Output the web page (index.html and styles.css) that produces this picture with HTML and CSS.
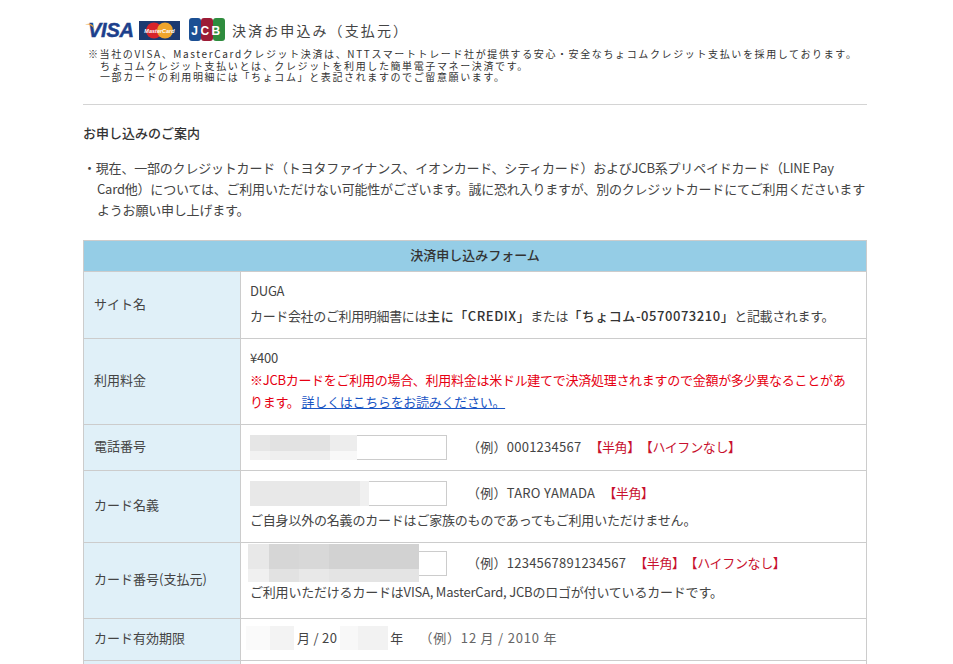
FILE: index.html

```html
<!DOCTYPE html>
<html lang="ja">
<head>
  <meta charset="UTF-8">
  <title>決済お申込み（支払元）</title>
  <link rel="stylesheet" href="styles.css">
</head>
<body>
  <div class="wrap">
    <div class="brand">
      <div class="brand-head">
        <svg class="logos" width="142" height="24" viewBox="0 0 142 24">
          <text x="3" y="19" font-family="Liberation Sans" font-size="20" font-weight="700" font-style="italic" fill="#1c3f8c" stroke="#1c3f8c" stroke-width="0.5" textLength="46">VISA</text>
          <path d="M0 6.500 C4 6 8 7 10 13 L8 7.500 C6 5.500 3 5.500 0 6.500 Z" fill="#e9a43a"/>
          <rect x="54" y="3" width="41" height="19" fill="#1d3a70"/>
          <circle cx="69" cy="12.5" r="8" fill="#d8232a"/>
          <circle cx="80" cy="12.5" r="8" fill="#efa52d"/>
          <text x="74.500" y="14.500" text-anchor="middle" font-family="Liberation Sans" font-size="5.500" font-weight="700" font-style="italic" fill="#fff">MasterCard</text>
          <rect x="104" y="0" width="12" height="23" rx="3" fill="#1b4f93"/>
          <rect x="116" y="0" width="12" height="23" rx="3" fill="#9c1c36"/>
          <rect x="128" y="0" width="12" height="23" rx="3" fill="#2f8c3e"/>
          <text x="122" y="17" text-anchor="middle" font-family="Liberation Sans" font-size="12" font-weight="700" letter-spacing="2.500" fill="#fff">JCB</text>
        </svg>
        <span class="brand-title">決済お申込み（支払元）</span>
      </div>
      <p class="brand-note">※当社のVISA、MasterCardクレジット決済は、NTTスマートトレード社が提供する安心・安全なちょコムクレジット支払いを採用しております。<br>
        <span class="indent">ちょコムクレジット支払いとは、クレジットを利用した簡単電子マネー決済です。</span><br>
        <span class="indent">一部カードの利用明細には「ちょコム」と表記されますのでご留意願います。</span></p>
    </div>

    <h4 class="guide-title">お申し込みのご案内</h4>
    <p class="guide">・現在、一部のクレジットカード（トヨタファイナンス、イオンカード、シティカード）およびJCB系プリペイドカード（LINE Pay<br>Card他）については、ご利用いただけない可能性がございます。誠に恐れ入りますが、別のクレジットカードにてご利用くださいますようお願い申し上げます。</p>

    <table class="form-table">
      <colgroup>
        <col class="col-label">
        <col>
      </colgroup>
      <tr><th colspan="2" class="form-head">決済申し込みフォーム</th></tr>
      <tr class="row-site">
        <th>サイト名</th>
        <td>
          <p class="line">DUGA</p>
          <p class="line line-next">カード会社のご利用明細書には<b>主に「CREDIX」</b>または<b>「ちょコム-0570073210」</b>と記載されます。</p>
        </td>
      </tr>
      <tr class="row-fee">
        <th>利用料金</th>
        <td>
          <p class="line">¥400</p>
          <p class="line warn">※JCBカードをご利用の場合、利用料金は米ドル建てで決済処理されますので金額が多少異なることがあります。<a href="#">詳しくはこちらをお読みください。</a></p>
        </td>
      </tr>
      <tr class="row-tel">
        <th>電話番号</th>
        <td>
          <div class="field">
            <span class="input-box">
              <input type="text">
              <span class="mosaic mosaic-tel"><i></i><i></i><i></i><i></i><i></i><i></i><i></i><i></i></span>
            </span>
            <span class="eg">（例）0001234567</span>
            <span class="req">【半角】</span>
            <span class="req">【ハイフンなし】</span>
          </div>
        </td>
      </tr>
      <tr class="row-name">
        <th>カード名義</th>
        <td>
          <div class="field">
            <span class="input-box">
              <input type="text">
              <span class="mosaic mosaic-name"><i></i><i></i></span>
            </span>
            <span class="eg">（例）TARO YAMADA</span>
            <span class="req">【半角】</span>
          </div>
          <p class="line sub">ご自身以外の名義のカードはご家族のものであってもご利用いただけません。</p>
        </td>
      </tr>
      <tr class="row-card">
        <th>カード番号(支払元)</th>
        <td>
          <div class="field">
            <span class="input-box">
              <input type="text">
              <span class="mosaic mosaic-card"><i></i><i></i><i></i><i></i><i></i><i></i><i></i><i></i><i></i><i></i></span>
            </span>
            <span class="eg">（例）1234567891234567</span>
            <span class="req">【半角】</span>
            <span class="req">【ハイフンなし】</span>
          </div>
          <p class="line sub">ご利用いただけるカードはVISA, MasterCard, JCBのロゴが付いているカードです。</p>
        </td>
      </tr>
      <tr class="row-exp">
        <th>カード有効期限</th>
        <td>
          <div class="expire">
            <span class="mosaic-inline mosaic-month"><i></i><i></i></span>
            <span>月 / 20</span>
            <span class="mosaic-inline mosaic-year"><i></i><i></i></span>
            <span>年</span>
            <span class="expire-eg">（例）12 月 / 2010 年</span>
          </div>
        </td>
      </tr>
      <tr class="row-last"><th></th><td></td></tr>
    </table>
  </div>
</body>
</html>
```

FILE: styles.css

```css
html, body {
  height: 664px;
  overflow: hidden;
}
body {
  margin: 0;
  background-color: #fff;
  color: #444;
  font-family: "Noto Sans CJK JP", "Liberation Sans", sans-serif;
  font-size: 13px;
}
.wrap {
  width: 784px;
  margin-left: 83px;
}
.brand {
  height: 86px;
  padding-top: 18px;
  border-bottom: 1px solid #d4d4d4;
}
.brand-head {
  display: flex;
  align-items: center;
  height: 24px;
  padding-left: 2px;
}
.brand-title {
  margin-left: 5px;
  font-size: 14px;
  letter-spacing: 2.1px;
  color: #444;
}
.brand-note {
  margin: 6px 0 0 5px;
  font-size: 10px;
  line-height: 11.5px;
  letter-spacing: 1.62px;
  color: #333;
  white-space: nowrap;
}
.indent {
  margin-left: 12px;
}
.guide-title {
  margin: 20px 0 0;
  font-size: 13px;
  font-weight: 500;
  line-height: 16px;
  color: #333;
}
.guide {
  margin: 16px 0 0;
  padding-left: 14px;
  text-indent: -14px;
  line-height: 21px;
  letter-spacing: -0.2px;
  color: #444;
}
.guide br + * {
  text-indent: 0;
}
.form-table {
  width: 784px;
  margin-top: 20px;
  border-collapse: collapse;
  table-layout: fixed;
}
.col-label {
  width: 157px;
}
.form-table th,
.form-table td {
  border: 1px solid #ccc;
  padding: 0 10px 4px 10px;
  font-weight: 400;
  text-align: left;
}
.form-table td {
  padding-left: 9px;
}
.form-table th {
  background-color: #e0f0f8;
}
.form-table .form-head {
  height: 27px;
  padding: 0 0 3px;
  background-color: #95cde6;
  font-weight: 500;
  text-align: center;
  color: #333;
}
.line {
  margin: 0;
  line-height: 22px;
  letter-spacing: -0.2px;
}
.line-next {
  margin-top: 3px;
  letter-spacing: -0.35px;
}
.line-next b {
  font-weight: 500;
  letter-spacing: 0.55px;
  color: #333;
}
.warn {
  letter-spacing: -0.28px;
  color: #e60012;
}
.warn a {
  margin-left: 2px;
  color: #1a56c4;
}
.row-site { height: 67px; }
.row-fee { height: 86px; }
.row-tel { height: 46px; }
.row-name { height: 72px; }
.row-card { height: 76px; }
.row-exp { height: 42px; }
.row-last { height: 30px; }
.form-table .row-tel td {
  padding-bottom: 0;
}
.form-table .row-name td {
  padding-bottom: 2px;
}
.form-table .row-card td {
  padding-bottom: 8px;
}
.row-card .sub {
  margin-top: 5px;
}
.field {
  display: flex;
  align-items: center;
  height: 25px;
  white-space: nowrap;
}
.field .eg,
.field .req {
  position: relative;
  top: -1px;
}
.input-box {
  position: relative;
  display: block;
  width: 197px;
  height: 25px;
}
.input-box input {
  display: block;
  width: 100%;
  height: 100%;
  margin: 0;
  padding: 0;
  box-sizing: border-box;
  border: 1px solid #ccc;
  background-color: #fff;
}
.eg {
  margin-left: 20px;
  letter-spacing: 0.25px;
}
.req {
  letter-spacing: -0.4px;
  color: #c8102e;
}
.eg + .req {
  margin-left: 8px;
}
.sub {
  margin-top: 3px;
}
.mosaic {
  position: absolute;
  display: grid;
}
.mosaic i,
.mosaic-inline i {
  display: block;
}
.mosaic-tel {
  left: 0;
  top: 0;
  width: 107px;
  height: 25px;
  grid-template-columns: 20px 30px 30px 27px;
  grid-template-rows: 16px 9px;
}
.mosaic-tel i:nth-child(1) { background: #e6e6e6; }
.mosaic-tel i:nth-child(2) { background: #e2e2e2; }
.mosaic-tel i:nth-child(3) { background: #e2e2e2; }
.mosaic-tel i:nth-child(4) { background: #ededed; }
.mosaic-tel i:nth-child(5) { background: #f2f2f2; }
.mosaic-tel i:nth-child(6) { background: #efefef; }
.mosaic-tel i:nth-child(7) { background: #eeeeee; }
.mosaic-tel i:nth-child(8) { background: #f8f8f8; }
.mosaic-name {
  left: 0;
  top: 0;
  width: 119px;
  height: 25px;
  grid-template-columns: 110px 9px;
}
.mosaic-name i:nth-child(1) { background: #e8e8e8; }
.mosaic-name i:nth-child(2) { background: #f0f0f0; }
.mosaic-card {
  left: -2px;
  top: -7px;
  width: 171px;
  height: 38px;
  grid-template-columns: 21px 30px 30px 30px 60px;
  grid-template-rows: 25px 13px;
}
.mosaic-card i:nth-child(1) { background: #e8e8e8; }
.mosaic-card i:nth-child(2) { background: #d6d6d6; }
.mosaic-card i:nth-child(3) { background: #d8d8d8; }
.mosaic-card i:nth-child(4) { background: #d2d2d2; }
.mosaic-card i:nth-child(5) { background: #d2d2d2; }
.mosaic-card i:nth-child(6) { background: #f0f0f0; }
.mosaic-card i:nth-child(7) { background: #e2e2e2; }
.mosaic-card i:nth-child(8) { background: #e8e8e8; }
.mosaic-card i:nth-child(9) { background: #e4e4e4; }
.mosaic-card i:nth-child(10) { background: #e4e4e4; }
.expire {
  display: flex;
  align-items: center;
  margin-left: -4px;
  white-space: nowrap;
}
.expire span + span {
  letter-spacing: 0.3px;
}
.mosaic-inline {
  display: flex;
  height: 24px;
}
.mosaic-month {
  width: 48px;
  margin-right: 3px;
}
.mosaic-month i:nth-child(1) { width: 24px; background: #fafafa; }
.mosaic-month i:nth-child(2) { width: 24px; background: #f3f3f3; }
.mosaic-year {
  width: 48px;
  margin: 0 2px 0 3px;
}
.mosaic-year i:nth-child(1) { width: 18px; background: #f8f8f8; }
.mosaic-year i:nth-child(2) { width: 30px; background: #f2f2f2; }
.expire .expire-eg {
  margin-left: 16px;
  letter-spacing: 0.8px;
  color: #666;
}
```
